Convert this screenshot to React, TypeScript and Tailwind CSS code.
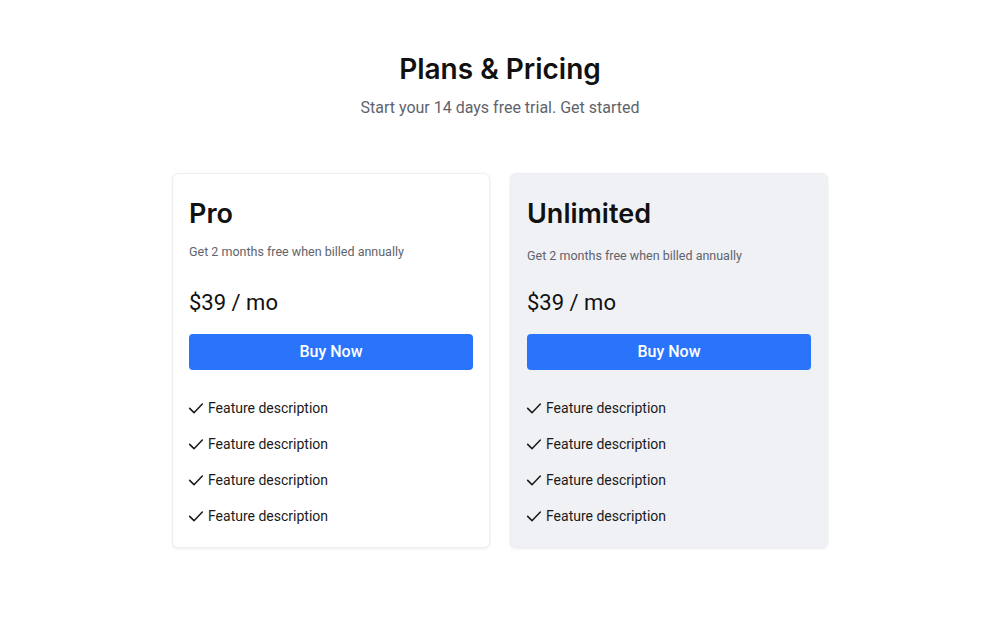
import React from "react";

function CheckIcon() {
  return (
    <svg width="16" height="16" viewBox="0 0 24 24" fill="none" stroke="currentColor" strokeWidth="2.3" strokeLinecap="round" strokeLinejoin="round" className="shrink-0 -ml-px">
      <path d="M2.5 12.5l6.5 6.5L21.5 6" />
    </svg>
  );
}

const heading = { fontFamily: "Inter, Roboto, sans-serif" };

function Card({ name, highlight }: { name: string; highlight?: boolean }) {
  return (
    <div
      className={`w-[318px] rounded-md border border-[#eceef3] shadow-[0_1px_3px_rgba(0,0,0,0.08)] px-4 pt-6 pb-[21px] ${
        highlight ? "bg-[#f0f1f5]" : "bg-white"
      }`}
    >
      <h2 className="text-[27px] leading-8 font-semibold text-[#111]" style={heading}>{name}</h2>
      <p className={`${highlight ? "mt-[18px]" : "mt-[14px]"} text-[12.5px] leading-4 text-[#5f636b]`}>
        Get 2 months free when billed annually
      </p>
      <div className={`${highlight ? "mt-[25px]" : "mt-[29px]"} text-[22px] leading-7 text-[#111]`}>$39 / mo</div>
      <button className="mt-[17px] w-full h-9 rounded bg-[#2a74fb] text-white text-[16px] font-medium">
        Buy Now
      </button>
      <ul className="mt-[28px] flex flex-col gap-4">
        {[0, 1, 2, 3].map((i) => (
          <li key={i} className="flex items-center gap-1 text-[14px] leading-5 text-[#1a1a1a]">
            <CheckIcon />
            <span>Feature description</span>
          </li>
        ))}
      </ul>
    </div>
  );
}

export default function App() {
  return (
    <div className="w-full min-h-[625px] bg-white flex flex-col items-center pt-[51px]" style={{ fontFamily: "Roboto, 'Liberation Sans', sans-serif" }}>
      <h1 className="text-[28px] leading-9 font-semibold text-[#111]" style={heading}>Plans &amp; Pricing</h1>
      <p className="mt-[9px] text-[16px] leading-6 text-[#5f636b]">Start your 14 days free trial. Get started</p>
      <div className="mt-[53px] flex gap-5">
        <Card name="Pro" />
        <Card name="Unlimited" highlight />
      </div>
    </div>
  );
}
